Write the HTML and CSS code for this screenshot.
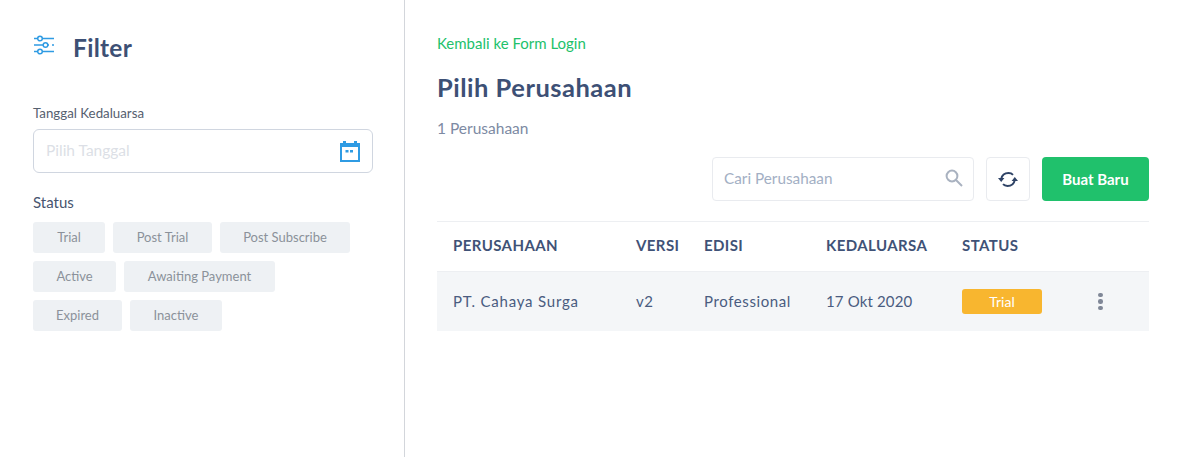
FILE: index.html
```html
<!DOCTYPE html>
<html lang="en">
<head>
    <meta charset="UTF-8">
    <meta name="viewport" content="width=device-width, initial-scale=1.0">
    <title>Pilih Perusahaan</title>
    <link rel="stylesheet" href="styles.css">
</head>
<body>
    <div class="page">
        <aside class="sidebar">
            <div class="filter-head">
                <svg class="filter-icon" width="22" height="22" viewBox="0 0 22 22" fill="none" stroke="#2f9be3" stroke-width="1.5">
                    <circle cx="7" cy="3.5" r="2.3"/>
                    <circle cx="12.5" cy="10" r="2.3"/>
                    <circle cx="7" cy="16.5" r="2.3"/>
                    <path d="M1 3.500h3.500M9.500 3.500H21M1 10h9M15 10h1M19 10h2M1 16.500h3.500M9.500 16.500H21"/>
                </svg>
                <h2>Filter</h2>
            </div>
            <div class="field-label">Tanggal Kedaluarsa</div>
            <div class="date-input">
                <span>Pilih Tanggal</span>
                <svg width="20" height="21" viewBox="0 0 20 21">
                    <path fill="#2f9be3" d="M3 0h3v2h8V0h3v2h3v19H0V2h3z"/>
                    <rect x="2" y="6" width="16" height="13" fill="#fff"/>
                    <rect x="5.500" y="9" width="3" height="2.500" fill="#2f9be3"/>
                    <rect x="10" y="9" width="3" height="2.500" fill="#2f9be3"/>
                </svg>
            </div>
            <div class="status-label">Status</div>
            <div class="chips">
                <span class="chip chip-trial">Trial</span>
                <span class="chip chip-post">Post Trial</span>
                <span class="chip chip-sub">Post Subscribe</span>
                <span class="chip chip-active">Active</span>
                <span class="chip chip-await">Awaiting Payment</span>
                <span class="chip chip-expired">Expired</span>
                <span class="chip chip-inactive">Inactive</span>
            </div>
        </aside>
        <main class="content">
            <a class="back-link" href="#">Kembali ke Form Login</a>
            <h1>Pilih Perusahaan</h1>
            <div class="count">1 Perusahaan</div>
            <div class="toolbar">
                <div class="search">
                    <span>Cari Perusahaan</span>
                    <svg width="18" height="18" viewBox="0 0 18 18" fill="none" stroke="#a9b2c0" stroke-width="2">
                        <circle cx="7" cy="7" r="5.400"/>
                        <path d="M11 11l6 6"/>
                    </svg>
                </div>
                <button class="refresh">
                    <svg width="20" height="15" viewBox="0 0 20 15" fill="none" stroke="#2f4366" stroke-width="1.900">
                        <path d="M3.200 7C4 3 7 1 10.500 1c2 0 3.500.7 4.500 1.800"/>
                        <path d="M16.800 8c-.8 4-3.800 6-7.300 6-2 0-3.500-.7-4.500-1.800"/>
                        <path fill="#2f4366" stroke="none" d="M0 6h6.400L3.200 10zM13.600 9H20L16.800 5z"/>
                    </svg>
                </button>
                <button class="btn-new">Buat Baru</button>
            </div>
            <table class="company-table">
                <thead>
                    <tr>
                        <th class="col-name">PERUSAHAAN</th>
                        <th class="col-ver">VERSI</th>
                        <th class="col-ed">EDISI</th>
                        <th class="col-exp">KEDALUARSA</th>
                        <th class="col-status">STATUS</th>
                        <th></th>
                    </tr>
                </thead>
                <tbody>
                    <tr>
                        <td class="cell-name">PT. Cahaya Surga</td>
                        <td>v2</td>
                        <td>Professional</td>
                        <td class="cell-date">17 Okt 2020</td>
                        <td><span class="badge">Trial</span></td>
                        <td><span class="dots"><i></i><i></i><i></i></span></td>
                    </tr>
                </tbody>
            </table>
        </main>
    </div>
</body>
</html>
```

FILE: styles.css
```css
* {
    box-sizing: border-box;
}
body {
    margin: 0;
    font-family: Lato, "Open Sans", sans-serif;
    background-color: #fff;
    color: #3d5075;
}
.page {
    display: flex;
    height: 457px;
    overflow: hidden;
}
.sidebar {
    width: 405px;
    flex-shrink: 0;
    padding: 33px 32px 0 33px;
    border-right: 1px solid #d3d6db;
}
.filter-head {
    display: flex;
    align-items: center;
    height: 33px;
}
.filter-icon {
    margin-top: -8px;
    margin-right: 18px;
}
.filter-head h2 {
    margin: 0 0 4px;
    font-size: 24.500px;
    font-weight: 700;
    color: #3d5075;
    letter-spacing: 0.3px;
}
.field-label {
    margin-top: 38px;
    font-size: 13.300px;
    line-height: 18px;
    color: #56606f;
}
.date-input {
    display: flex;
    align-items: center;
    justify-content: space-between;
    width: 340px;
    height: 44px;
    margin-top: 7px;
    padding: 0 12px 2px 12px;
    border: 1px solid #d0d6e0;
    border-radius: 6px;
    font-size: 15.500px;
    color: #dcdfe6;
}
.date-input svg {
    margin-top: 2px;
}
.status-label {
    margin-top: 20px;
    font-size: 15px;
    line-height: 18px;
    color: #48556f;
}
.chips {
    display: flex;
    flex-wrap: wrap;
    gap: 8px;
    width: 330px;
    margin-top: 11px;
}
.chip {
    display: flex;
    align-items: center;
    justify-content: center;
    height: 31px;
    padding-bottom: 2px;
    border-radius: 3px;
    background-color: #eef1f4;
    font-size: 13px;
    color: #8b919a;
}
.chip-trial { width: 72px; }
.chip-post { width: 99px; }
.chip-sub { width: 130px; }
.chip-active { width: 83px; }
.chip-await { width: 151px; margin-right: 60px; }
.chip-expired { width: 89px; }
.chip-inactive { width: 92px; }
.content {
    flex: 1;
    padding: 33px 33px 0 32px;
}
.back-link {
    display: block;
    font-size: 15px;
    line-height: 20px;
    color: #22c16b;
    text-decoration: none;
}
h1 {
    margin: 17px 0 0;
    font-size: 25.500px;
    line-height: 34px;
    font-weight: 700;
    color: #3d5075;
    letter-spacing: 0.5px;
}
.count {
    margin-top: 14px;
    font-size: 15.500px;
    line-height: 20px;
    color: #7d8aa3;
}
.toolbar {
    display: flex;
    justify-content: flex-end;
    margin-top: 19px;
    padding-bottom: 20px;
    border-bottom: 1px solid #edeff2;
}
.search {
    display: flex;
    align-items: center;
    justify-content: space-between;
    width: 262px;
    height: 44px;
    padding: 0 10px 2px 11px;
    border: 1px solid #e9ebef;
    border-radius: 4px;
    font-size: 15.300px;
    color: #a3afc4;
}
.refresh {
    display: flex;
    align-items: center;
    justify-content: center;
    width: 44px;
    height: 44px;
    margin-left: 12px;
    padding: 0;
    border: 1px solid #e9ebef;
    border-radius: 4px;
    background-color: #fff;
}
.btn-new {
    width: 107px;
    height: 44px;
    margin-left: 12px;
    border: 0;
    border-radius: 4px;
    background-color: #20c16c;
    font-family: inherit;
    font-size: 15px;
    font-weight: 700;
    color: #fff;
}
.company-table {
    width: 712px;
    border-collapse: collapse;
    table-layout: fixed;
}
.company-table th {
    height: 49px;
    padding: 0 0 2px;
    border-bottom: 1px solid #edeff2;
    text-align: left;
    font-size: 15px;
    font-weight: 700;
    letter-spacing: 0.4px;
    color: #3f5277;
}
.company-table td {
    height: 60px;
    padding: 0;
    background-color: #f4f6f8;
    font-size: 15px;
    letter-spacing: 0.6px;
    color: #4a5c80;
}
.company-table th:first-child,
.company-table td:first-child {
    padding-left: 16px;
}
.company-table .cell-name {
    letter-spacing: 0.800px;
}
.company-table .cell-date {
    letter-spacing: 0.150px;
}
.col-name { width: 199px; }
.col-ver { width: 68px; }
.col-ed { width: 122px; }
.col-exp { width: 136px; }
.col-status { width: 136px; }
.badge {
    display: block;
    width: 80px;
    height: 25px;
    border-radius: 3px;
    background-color: #f8b62f;
    font-size: 14px;
    line-height: 25px;
    text-align: center;
    letter-spacing: 0;
    color: #fff;
}
.dots {
    display: flex;
    flex-direction: column;
    gap: 2px;
    width: 5px;
}
.dots i {
    width: 4.500px;
    height: 4.500px;
    border-radius: 50%;
    background-color: #7f8797;
}
```
